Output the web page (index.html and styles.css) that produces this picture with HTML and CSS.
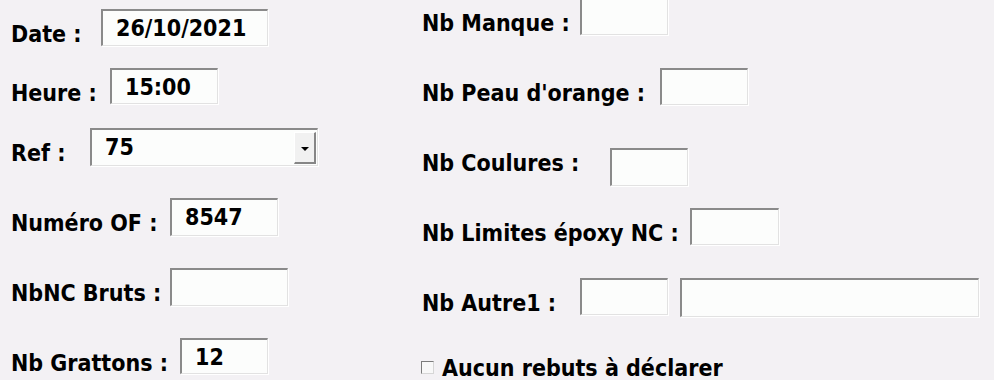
FILE: index.html
```html
<!DOCTYPE html>
<html lang="fr">
<head>
<meta charset="utf-8">
<title>Saisie rebuts</title>
<link rel="stylesheet" href="styles.css">
</head>
<body>
<div class="form">
  <div class="col col-left">
    <div class="row h59"><span class="lbl w90">Date :</span><div class="fld w167">26/10/2021</div></div>
    <div class="row h60"><span class="lbl w99">Heure :</span><div class="fld w108 short">15:00</div></div>
    <div class="row h70"><span class="lbl w79">Ref :</span>
      <div class="fld combo w228"><span class="combo-val">75</span><span class="combo-btn"><span class="arrow"></span></span></div>
    </div>
    <div class="row h70"><span class="lbl w159">Numéro OF :</span><div class="fld w108 tall">8547</div></div>
    <div class="row h70"><span class="lbl w159">NbNC Bruts :</span><div class="fld w118 tall"></div></div>
    <div class="row"><span class="lbl w169">Nb Grattons :</span><div class="fld w88 short">12</div></div>
  </div>
  <div class="col col-right">
    <div class="row h70"><span class="lbl w158">Nb Manque :</span><div class="fld w88"></div></div>
    <div class="row h70"><span class="lbl w238">Nb Peau d'orange :</span><div class="fld w88"></div></div>
    <div class="row h70"><span class="lbl w188">Nb Coulures :</span><div class="fld w78 tall low"></div></div>
    <div class="row h70"><span class="lbl w268">Nb Limites époxy NC :</span><div class="fld w89"></div></div>
    <div class="row h70"><span class="lbl w158">Nb Autre1 :</span><div class="fld w88"></div><div class="fld wide"></div></div>
    <label class="row check-row"><span class="checkbox"></span><span class="check-lbl">Aucun rebuts à déclarer</span></label>
  </div>
</div>
</body>
</html>
```

FILE: styles.css
```css
html, body {
  margin: 0;
  padding: 0;
}
body {
  background: #f3f1f4;
  font-family: "DejaVu Sans Condensed", "DejaVu Sans", "Liberation Sans", sans-serif;
  font-stretch: condensed;
  font-weight: bold;
  color: #000;
  width: 994px;
  height: 380px;
  overflow: hidden;
}
.form {
  display: flex;
  align-items: flex-start;
}
.col {
  display: flex;
  flex-direction: column;
  box-sizing: border-box;
}
.col-left {
  width: 411px;
  padding: 9px 0 0 11px;
}
.col-right {
  margin-top: -2px;
  padding-left: 11px;
}
.row {
  display: flex;
  align-items: flex-start;
  flex: none;
}
.h59 { height: 59px; }
.h60 { height: 60px; }
.h70 { height: 70px; }

.lbl {
  flex: none;
  font-size: 23px;
  line-height: 26px;
  margin-top: 12px;
  white-space: nowrap;
}
.w79 { width: 79px; }
.w90 { width: 90px; }
.w99 { width: 99px; }
.w158 { width: 158px; }
.w159 { width: 159px; }
.w169 { width: 169px; }
.w188 { width: 188px; }
.w238 { width: 238px; }
.w268 { width: 268px; }

.fld {
  flex: none;
  box-sizing: border-box;
  height: 37px;
  border-style: solid;
  border-width: 2px 1px 1px 2px;
  border-color: #8a8a8a #e2e2e2 #e2e2e2 #8a8a8a;
  box-shadow: 1px 1px 0 #ffffff;
  background: #fcfdfc;
  font-size: 23px;
  line-height: 26px;
  padding: 4px 0 0 13px;
  white-space: nowrap;
}
.fld.short { height: 36px; }
.fld.tall { height: 38px; }
.fld.low { margin-top: 10px; }
.w78 { width: 78px; }
.w88 { width: 88px; }
.w89 { width: 89px; }
.w108 { width: 108px; }
.w118 { width: 118px; }
.w167 { width: 167px; }
.w228 { width: 228px; }
.fld.wide {
  width: 299px;
  height: 39px;
  margin-left: 12px;
}

.combo {
  display: flex;
  align-items: flex-start;
  padding: 0;
  height: 38px;
}
.combo-val {
  flex: 1;
  padding: 4px 0 0 13px;
}
.combo-btn {
  flex: none;
  box-sizing: border-box;
  width: 22px;
  height: 32px;
  margin: 2px 1px 0 0;
  background: #f1f1f1;
  border-style: solid;
  border-width: 1px 2px 2px 1px;
  border-color: #ffffff #868686 #868686 #ffffff;
  display: flex;
  align-items: center;
  justify-content: center;
}
.arrow {
  width: 0;
  height: 0;
  border-left: 4px solid transparent;
  border-right: 4px solid transparent;
  border-top: 4px solid #000;
  margin-top: 2px;
}

.check-row {
  align-items: flex-start;
}
.checkbox {
  flex: none;
  box-sizing: border-box;
  width: 13px;
  height: 13px;
  margin: 13px 8px 0 -1px;
  border-style: solid;
  border-width: 1px;
  border-color: #7c7c7c #d6d6d6 #d6d6d6 #7c7c7c;
  background: #f8f8f8;
}
.check-lbl {
  font-size: 23px;
  line-height: 26px;
  margin-top: 7px;
  white-space: nowrap;
}
```
